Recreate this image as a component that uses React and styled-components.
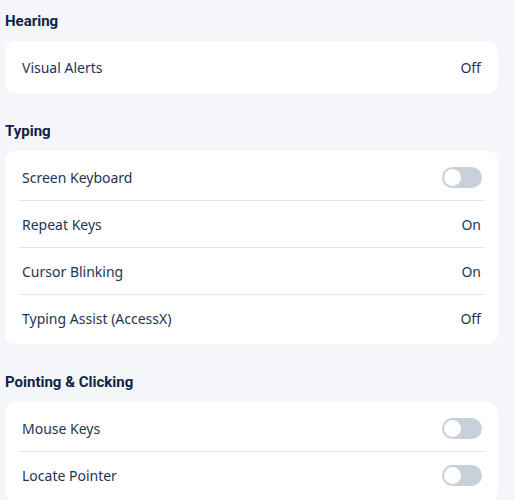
import React from 'react';
import styled, { createGlobalStyle } from 'styled-components';

const GlobalStyle = createGlobalStyle`
  html, body {
    margin: 0;
    padding: 0;
    background: #f4f6fa;
    font-family: 'Noto Sans', 'Open Sans', sans-serif;
    color: #1e3456;
  }
`;

const Page = styled.div`
  display: flex;
  flex-direction: column;
  gap: 28px;
  padding: 11px 16px 20px 5px;
`;

const Section = styled.section`
  display: flex;
  flex-direction: column;
  gap: 10px;
`;

const Title = styled.h2`
  margin: 0;
  font-family: Roboto, 'Noto Sans', sans-serif;
  font-size: 15px;
  line-height: 20px;
  font-weight: 700;
  color: #102447;
`;

const Card = styled.div`
  background: #ffffff;
  border-radius: 10px;
  padding: 3px 0;
  display: flex;
  flex-direction: column;
`;

const Row = styled.div`
  display: flex;
  align-items: center;
  justify-content: space-between;
  height: 46px;
  padding: 0 17px;
  font-size: 14px;
  color: #1e3456;
`;

const Divider = styled.div`
  height: 1px;
  margin: 0 13px;
  background: #e3e7ee;
`;

const Value = styled.span`
  font-size: 14px;
  color: #1e3456;
`;

const Toggle = styled.span`
  position: relative;
  width: 40px;
  height: 21px;
  border-radius: 11px;
  background: ${p => (p.$on ? '#3b82f6' : '#c8d0da')};
  margin-right: -1px;

  &::after {
    content: '';
    position: absolute;
    top: 2px;
    left: ${p => (p.$on ? '21px' : '2px')};
    width: 17px;
    height: 17px;
    border-radius: 50%;
    background: #ffffff;
  }
`;

const sections = [
  {
    title: 'Hearing',
    items: [{ label: 'Visual Alerts', value: 'Off' }],
  },
  {
    title: 'Typing',
    items: [
      { label: 'Screen Keyboard', toggle: false },
      { label: 'Repeat Keys', value: 'On' },
      { label: 'Cursor Blinking', value: 'On' },
      { label: 'Typing Assist (AccessX)', value: 'Off' },
    ],
  },
  {
    title: 'Pointing & Clicking',
    items: [
      { label: 'Mouse Keys', toggle: false },
      { label: 'Locate Pointer', toggle: false },
    ],
  },
];

const App = () => (
  <>
    <GlobalStyle />
    <Page>
      {sections.map(section => (
        <Section key={section.title}>
          <Title>{section.title}</Title>
          <Card>
            {section.items.map((item, i) => (
              <React.Fragment key={item.label}>
                {i > 0 && <Divider />}
                <Row>
                  <span>{item.label}</span>
                  {'toggle' in item ? <Toggle $on={item.toggle} /> : <Value>{item.value}</Value>}
                </Row>
              </React.Fragment>
            ))}
          </Card>
        </Section>
      ))}
    </Page>
  </>
);

export default App;
